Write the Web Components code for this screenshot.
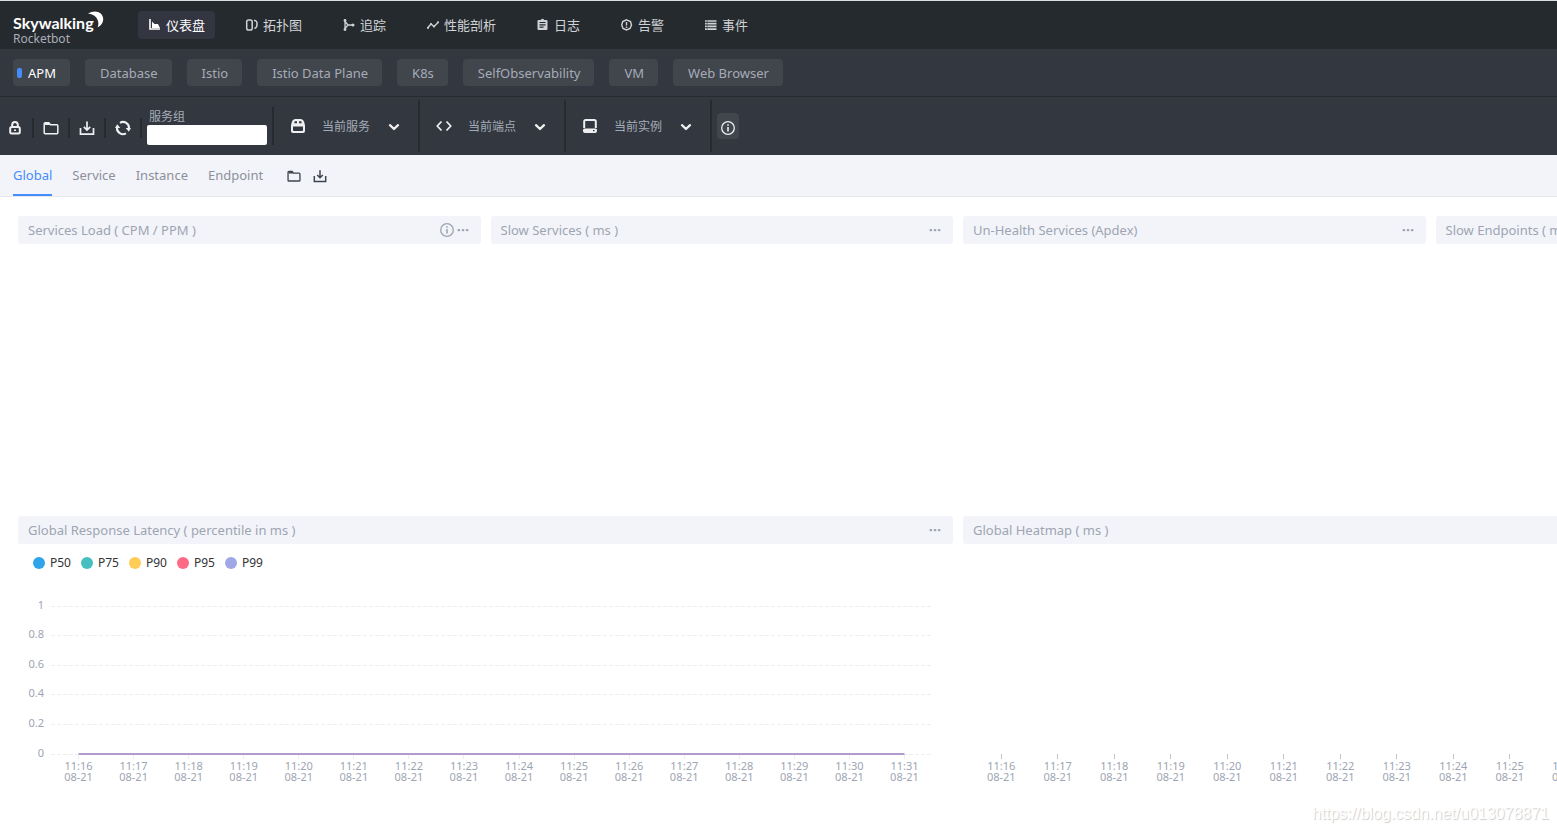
<!DOCTYPE html>
<html lang="zh-CN">
<head>
<meta charset="utf-8">
<title>SkyWalking Rocketbot</title>
<style>
  html, body { margin: 0; min-height: 100%; }
  body { background: #fff; font: 13px/18px "Noto Sans", "Noto Sans CJK SC", sans-serif; color: #3d444f; overflow-x: hidden; }
</style>
</head>
<body>
<sky-app></sky-app>
<script>
const ICONS = {
  chart: '<path d="M1 0v10h10" fill="none" stroke="currentColor" stroke-width="1.6"/><path d="M3 9V2.500l2.500 2.500H9L11 9z" fill="currentColor"/>',
  topology: '<g fill="none" stroke="currentColor" stroke-width="1.500"><rect x="0.700" y="1" width="5.500" height="10" rx="1.800"/><path d="M8 1.500h1q2 .5 2 2.500v1.500q0 3-2.500 4"/></g>',
  trace: '<g fill="none" stroke="currentColor" stroke-width="1.300"><path d="M2 1v10M2 2.500l3 3.500h5M2 9.500l3-3.500"/></g><circle cx="2" cy="1.500" r="1.400" fill="currentColor"/><circle cx="2" cy="10.500" r="1.400" fill="currentColor"/><circle cx="10" cy="6" r="1.500" fill="currentColor"/>',
  profile: '<path d="M0.500 9l3.500-4 3 2.500L11.500 3" fill="none" stroke="currentColor" stroke-width="1.400"/><circle cx="1" cy="9" r="1" fill="currentColor"/><circle cx="4" cy="5" r="1" fill="currentColor"/><circle cx="7" cy="7.500" r="1" fill="currentColor"/><circle cx="11" cy="3.300" r="1" fill="currentColor"/>',
  log: '<path fill="currentColor" fill-rule="evenodd" d="M1.500 1h2.300Q4.500-.3 5.500-.3T7.200 1h2.300q1 0 1 1v8q0 1-1 1h-8q-1 0-1-1V2q0-1 1-1zM2.500 3v1.100h6V3zM2.500 5.300v1.100h6V5.300zM2.500 7.600v1.100h4V7.600z"/>',
  alarm: '<path d="M5.500 .8L9.500 2.500 10.500 6 9 9.500 5.500 11 2 9.500 .7 6l1-3.500z" fill="none" stroke="currentColor" stroke-width="1.400"/><path d="M5.500 3v3.500M5.500 7.500v1.400" stroke="currentColor" stroke-width="1.400"/>',
  event: '<path d="M0 2h1.800M0 4.700h1.800M0 7.400h1.800M0 10.100h1.800M2.300 2H11.500M2.300 4.700H11.500M2.300 7.400H11.500M2.300 10.100H11.500" stroke="currentColor" stroke-width="1.700"/>',
  lock: '<path d="M5.200 7V4.700a2.800 2.800 0 0 1 5.600 0V7" fill="none" stroke="currentColor" stroke-width="2"/><rect x="3.200" y="7" width="9.600" height="6.500" rx="1.500" fill="none" stroke="currentColor" stroke-width="2"/><path d="M7 10.200h2" stroke="currentColor" stroke-width="1.500"/>',
  folder: '<path d="M1.200 13V3.700q0-1 1-1h3.600l1.700 2h6.300q1 0 1 1V13q0 .7-1 .7H2.200q-1 0-1-.7z" fill="none" stroke="currentColor" stroke-width="1.500"/><path d="M2 3h4l1.500 2H2z" fill="currentColor"/>',
  download: '<path d="M1.500 8v6.200h13V8M8 1.500v8M4.800 6.800L8 10l3.200-3.200" fill="none" stroke="currentColor" stroke-width="1.700"/>',
  refresh: '<path d="M5 2.800A6 6 0 0 1 14 8.500M11 13.300A6 6 0 0 1 2 7.500" fill="none" stroke="currentColor" stroke-width="2.100"/><path d="M10.700 8h5.300L13.800 11.800zM0 8h5.300L2.200 4.200z" fill="currentColor"/>',
  service: '<path fill="currentColor" fill-rule="evenodd" d="M5 1h6q2.500.3 3.200 3l.8 3.500V13q0 2-2 2H3q-2 0-2-2V7.500L1.800 4Q2.500 1.300 5 1zM4.600 3.200L4.300 5.200H7V3.200zM9 3.200v2h2.700l-.3-2zM3 8.600v3.700q0 .8.800.8h8.400q.8 0 .8-.8V8.600z"/>',
  code: '<path d="M5.500 3.500L1.300 8l4.200 4.500M10.500 3.500L14.700 8l-4.200 4.500" fill="none" stroke="currentColor" stroke-width="1.700"/>',
  instance: '<path d="M2.200 10V3.500Q2.200 2 3.700 2h8.600q1.500 0 1.500 1.500V10" fill="none" stroke="currentColor" stroke-width="2"/><path fill="currentColor" fill-rule="evenodd" d="M2.500 10.500h11q1.500 0 1.500 1.500v1q0 2-2 2H3q-2 0-2-2v-1q0-1.500 1.500-1.500zM11 12v1.200h1.500V12z"/>',
  chevron: '<path d="M4 6.200L8 10l4-3.800" fill="none" stroke="currentColor" stroke-width="2.300" stroke-linecap="round" stroke-linejoin="round"/>',
  info: '<circle cx="8" cy="8" r="6.300" fill="none" stroke="currentColor" stroke-width="1.300"/><path d="M8 7v4.500M8 4.300v1.500" stroke="currentColor" stroke-width="1.600"/>',
  more: '<rect x="2.500" y="7" width="2.700" height="2.200" rx="1" fill="currentColor"/><rect x="6.700" y="7" width="2.700" height="2.200" rx="1" fill="currentColor"/><rect x="10.800" y="7" width="2.700" height="2.200" rx="1" fill="currentColor"/>'
};
const SMALL = ['chart', 'topology', 'trace', 'profile', 'log', 'alarm', 'event'];

function define(name, html, init) {
  const tpl = document.createElement('template');
  tpl.innerHTML = html;
  customElements.define(name, class extends HTMLElement {
    connectedCallback() {
      if (this.shadowRoot) return;
      this.attachShadow({ mode: 'open' }).append(tpl.content.cloneNode(true));
      if (init) init(this, this.shadowRoot);
    }
  });
}

define('sky-icon', `<style>
  :host { display: block; flex: none; width: 16px; height: 16px; }
  :host([small]) { width: 12px; height: 12px; }
  :host([medium]) { width: 14px; height: 14px; }
  svg { display: block; width: 100%; height: 100%; overflow: visible; }
</style><svg aria-hidden="true"></svg>`, (el, root) => {
  const name = el.getAttribute('name');
  const svg = root.querySelector('svg');
  svg.setAttribute('viewBox', SMALL.includes(name) ? '0 0 12 12' : '0 0 16 16');
  svg.innerHTML = ICONS[name];
});

define('sky-logo', `<style>
  :host { display: block; position: relative; width: 92px; height: 38px; }
  .name { display: block; padding-top: 7px; color: #fff; font: 700 16px/20px Lato, sans-serif; }
  .sub { display: block; color: #a9aeb8; font-size: 12px; line-height: 12px; }
  svg { position: absolute; left: 75px; top: 5px; }
</style>
<span class="name">Skywalking</span><span class="sub">Rocketbot</span>
<svg width="16" height="17" viewBox="0 0 16 17" aria-hidden="true"><path d="M0 2.500C7-2 15.500 1 15.200 8.500c-.2 3.500-2.500 6.600-5.600 7.800C12 11 9 3.500 0 2.500z" fill="#fff"/></svg>`);

define('sky-nav-item', `<style>
  :host { display: block; }
  a { display: flex; align-items: center; gap: 5px; height: 28px; padding: 0 10px 0 11px; border-radius: 4px; color: #d0d2d5; text-decoration: none; }
  :host([active]) a { background: #333541; color: #fff; }
</style><a href="#"><slot></slot></a>`, (el, root) => {
  const icon = document.createElement('sky-icon');
  icon.setAttribute('small', '');
  icon.setAttribute('name', el.getAttribute('icon'));
  root.querySelector('a').prepend(icon);
});

define('sky-header', `<style>
  :host { display: flex; align-items: center; height: 48px; padding: 0 13px; border-top: 1px solid #d9dee0; background: #252a2f; }
  nav { display: flex; gap: 20px; margin-left: 33px; }
</style>
<sky-logo></sky-logo>
<nav>
  <sky-nav-item icon="chart" active>仪表盘</sky-nav-item>
  <sky-nav-item icon="topology">拓扑图</sky-nav-item>
  <sky-nav-item icon="trace">追踪</sky-nav-item>
  <sky-nav-item icon="profile">性能剖析</sky-nav-item>
  <sky-nav-item icon="log">日志</sky-nav-item>
  <sky-nav-item icon="alarm">告警</sky-nav-item>
  <sky-nav-item icon="event">事件</sky-nav-item>
</nav>`);

define('sky-group', `<style>
  :host { display: block; }
  button { display: flex; align-items: center; height: 27px; padding: 0 14px 0 15px; border: 0; border-radius: 4px; background: #41454c; color: #a5acb8; font: inherit; }
  :host([active]) button { padding-left: 4px; color: #fff; }
  :host([active]) button::before { content: ""; width: 5px; height: 10px; margin-right: 6px; border-radius: 2px; background: #448dfe; }
</style><button type="button"><slot></slot></button>`);

define('sky-groups', `<style>
  :host { display: flex; align-items: center; gap: 15px; height: 47px; padding: 0 13px; background: #333840; border-bottom: 1px solid #252a2f; }
</style>
<sky-group active>APM</sky-group><sky-group>Database</sky-group><sky-group>Istio</sky-group><sky-group>Istio Data Plane</sky-group><sky-group>K8s</sky-group><sky-group>SelfObservability</sky-group><sky-group>VM</sky-group><sky-group>Web Browser</sky-group>`);

define('sky-selector', `<style>
  :host { display: block; }
  button { display: flex; align-items: center; width: 146px; height: 52px; padding: 0 16px; border: 0; border-right: 2px solid #252a2f; background: none; color: #a5acb8; font: inherit; font-size: 12px; text-align: left; }
  span { flex: 1; margin-left: 16px; padding-top: 2px; }
  sky-icon { color: #efeff1; }
  sky-icon[name="chevron"] { padding-top: 2px; }
</style><button type="button"><span><slot></slot></span><sky-icon name="chevron"></sky-icon></button>`, (el, root) => {
  const icon = document.createElement('sky-icon');
  icon.setAttribute('name', el.getAttribute('icon'));
  root.querySelector('button').prepend(icon);
});

define('sky-toolbar', `<style>
  :host { display: flex; align-items: center; height: 58px; background: #333840; color: #efeff1; }
  .tool { display: flex; align-items: center; justify-content: center; width: 36px; height: 20px; padding: 0; border: 0; border-right: 2px solid #252a2f; background: none; color: inherit; }
  .tools { display: flex; margin-left: -2px; padding-top: 3px; }
  .group { display: flex; flex-direction: column; width: 120px; height: 38px; padding: 0 5px; border-right: 2px solid #252a2f; }
  label { padding: 1px 0 0 2px; color: #a5acb8; font-size: 12px; line-height: 17px; }
  input { box-sizing: border-box; width: 100%; height: 20px; border: 0; border-radius: 2px; background: #fff; }
  .info { display: flex; align-items: center; justify-content: center; width: 22px; height: 26px; margin-left: 5px; padding: 4px 0 0; border: 0; border-radius: 4px; background: #41454c; color: inherit; }
</style>
<div class="tools">
  <button class="tool" type="button" aria-label="Lock"><sky-icon name="lock"></sky-icon></button>
  <button class="tool" type="button" aria-label="Import"><sky-icon name="folder"></sky-icon></button>
  <button class="tool" type="button" aria-label="Export"><sky-icon name="download"></sky-icon></button>
  <button class="tool" type="button" aria-label="Refresh"><sky-icon name="refresh"></sky-icon></button>
</div>
<div class="group"><label for="group">服务组</label><input id="group" type="text"></div>
<sky-selector icon="service">当前服务</sky-selector>
<sky-selector icon="code">当前端点</sky-selector>
<sky-selector icon="instance">当前实例</sky-selector>
<button class="info" type="button" aria-label="Info"><sky-icon name="info"></sky-icon></button>`);

define('sky-tabs', `<style>
  :host { display: flex; height: 41px; padding: 0 13px; background: #f3f4f9; border-bottom: 1px solid #e6e8ec; }
  nav { display: flex; gap: 20px; }
  a { box-sizing: border-box; height: 41px; line-height: 40px; color: #8b909b; text-decoration: none; border-bottom: 2px solid transparent; }
  a[aria-current] { color: #448dfe; border-color: #448dfe; }
  .actions { display: flex; align-items: center; gap: 12px; margin-left: 24px; }
  button { padding: 0; border: 0; background: none; color: #3d444f; }
</style>
<nav><a href="#" aria-current="page">Global</a><a href="#">Service</a><a href="#">Instance</a><a href="#">Endpoint</a></nav>
<div class="actions">
  <button type="button" aria-label="Import"><sky-icon medium name="folder"></sky-icon></button>
  <button type="button" aria-label="Export"><sky-icon medium name="download"></sky-icon></button>
</div>`);

define('sky-panel', `<style>
  :host { display: flex; flex-direction: column; min-width: 0; }
  :host([wide]) { grid-column: span 2; }
  header { display: flex; align-items: center; height: 28px; padding: 0 10px; border-radius: 3px; background: #f3f4f9; color: #9da5b2; }
  h2 { flex: 1; margin: 0; font: inherit; white-space: nowrap; }
  button { padding: 0; border: 0; background: none; color: inherit; }
  .info { display: none; }
  :host([info]) .info { display: block; }
  section { flex: 1; min-height: 0; }
</style>
<header><h2><slot name="title"></slot></h2><button class="info" type="button" aria-label="Info"><sky-icon name="info"></sky-icon></button><button type="button" aria-label="More"><sky-icon name="more"></sky-icon></button></header>
<section><slot></slot></section>`);

define('sky-legend', `<style>
  :host { display: block; }
  ul { display: flex; gap: 10px; margin: 0; padding: 10px 15px 0; list-style: none; color: #333; font-size: 12px; line-height: 18px; }
  li { display: flex; align-items: center; gap: 5px; }
  i { width: 12px; height: 12px; border-radius: 50%; }
</style><ul></ul>`, (el, root) => {
  const series = { P50: '#30a4eb', P75: '#45bfc0', P90: '#ffcc55', P95: '#ff6a84', P99: '#a0a7e6' };
  root.querySelector('ul').innerHTML = Object.entries(series)
    .map(([name, color]) => `<li><i style="background:${color}"></i>${name}</li>`).join('');
});

/* Time axis chart; attribute "values" adds the value axis and a flat series. */
define('sky-chart', `<style>
  :host { display: block; height: 190px; }
  :host([tall]) { height: 218px; }
  svg { display: block; width: 100%; height: 100%; overflow: visible; }
  text { fill: #9da5b2; font-size: 11px; }
</style><svg></svg>`, (el, root) => {
  const svg = root.querySelector('svg');
  const values = el.hasAttribute('values');
  const draw = () => {
    const width = el.clientWidth, base = el.clientHeight - 8;
    const left = values ? 33 : 10, right = width - 21;
    const band = (right - left) / 16;
    let out = '';
    if (values) {
      ['0', '0.2', '0.4', '0.6', '0.8', '1'].forEach((label, i) => {
        const y = Math.floor(base - i * 148 / 5) + 0.5;
        out += `<line x1="${left}" x2="${right}" y1="${y}" y2="${y}" stroke="#eee" stroke-dasharray="4 2"/>`;
        out += `<text x="${left - 7}" y="${Math.floor(y) + 3}" text-anchor="end">${label}</text>`;
      });
    }
    for (let i = 0; i < 16; i++) {
      const x = left + band * (i + 0.5), tick = Math.floor(x) + 0.5;
      out += `<line x1="${tick}" x2="${tick}" y1="${base}" y2="${base + 5}" stroke="${values ? '#eee' : '#c0c4cc'}"/>`;
      out += `<text x="${x}" y="${base + 16}" text-anchor="middle">11:${16 + i}</text>`;
      out += `<text x="${x}" y="${base + 27}" text-anchor="middle">08-21</text>`;
    }
    if (values) out += `<line x1="${left + band / 2}" x2="${right - band / 2}" y1="${base}" y2="${base}" stroke="#b59bcb" stroke-width="2"/>`;
    svg.innerHTML = out;
  };
  draw();
  new ResizeObserver(draw).observe(el);
});

define('sky-dashboard', `<style>
  :host { display: block; overflow: hidden; padding: 19px 18px 0; }
  .grid { display: grid; grid-template-columns: repeat(4, 1fr); grid-auto-rows: 290px; gap: 10px; min-width: 1880px; }
</style>
<div class="grid">
  <sky-panel info><span slot="title">Services Load ( CPM / PPM )</span></sky-panel>
  <sky-panel><span slot="title">Slow Services ( ms )</span></sky-panel>
  <sky-panel><span slot="title">Un-Health Services (Apdex)</span></sky-panel>
  <sky-panel><span slot="title">Slow Endpoints ( ms )</span></sky-panel>
  <sky-panel wide><span slot="title">Global Response Latency ( percentile in ms )</span><sky-legend></sky-legend><sky-chart values></sky-chart></sky-panel>
  <sky-panel wide><span slot="title">Global Heatmap ( ms )</span><sky-chart tall></sky-chart></sky-panel>
</div>`);

define('sky-app', `<style>
  :host { display: flow-root; position: relative; min-height: 100vh; }
  .mark { position: absolute; right: 8px; bottom: 9px; font: 16px/18px "Liberation Sans", sans-serif; color: #fff; text-shadow: 1px 1px 1px #ccc; }
</style>
<sky-header></sky-header><sky-groups></sky-groups><sky-toolbar></sky-toolbar><sky-tabs></sky-tabs>
<sky-dashboard></sky-dashboard>
<span class="mark">https://blog.csdn.net/u013078871</span>`);
</script>
</body>
</html>
